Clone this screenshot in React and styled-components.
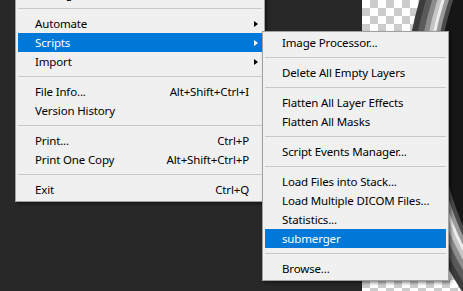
import React from 'react';
import styled, { createGlobalStyle } from 'styled-components';

const GlobalStyle = createGlobalStyle`
  html, body {
    margin: 0;
    padding: 0;
    background: #282828;
    overflow: hidden;
  }
`;

const Workspace = styled.div`
  position: relative;
  width: 463px;
  height: 291px;
  display: flex;
  overflow: hidden;
  font-family: 'Noto Sans', 'Segoe UI', sans-serif;
  font-size: 11.5px;
  letter-spacing: -0.15px;
`;

const Pasteboard = styled.div`
  flex: 1;
  background: #282828;
`;

const Canvas = styled.div`
  width: 101px;
  height: 100%;
  background-color: #ffffff;
  background-image: conic-gradient(#cccccc 25%, #ffffff 0 50%, #cccccc 0 75%, #ffffff 0);
  background-size: 16px 16px;
  background-position: 0 0;
`;

const Artwork = styled.svg`
  display: block;
  width: 100%;
  height: 100%;
`;

const Menu = styled.div`
  position: absolute;
  left: ${({ $left }) => $left}px;
  top: ${({ $top }) => $top}px;
  width: ${({ $width }) => $width}px;
  background: #f0f0f0;
  border: 1px solid #a0a0a0;
  padding: 1px 2px 2px;
  box-shadow: 2px 2px 3px rgba(0, 0, 0, 0.45);
`;

const Row = styled.div`
  display: flex;
  align-items: center;
  height: 19px;
  padding: 0 3px 0 17px;
  color: ${({ $active }) => ($active ? '#ffffff' : '#000000')};
  background: ${({ $active }) => ($active ? '#0078d7' : 'transparent')};
  white-space: nowrap;
`;

const Label = styled.span`
  flex: 1;
`;

const Shortcut = styled.span`
  text-align: right;
`;

const ArrowSlot = styled.span`
  width: 10px;
  display: flex;
  justify-content: flex-end;
`;

const Arrow = styled.span`
  width: 0;
  height: 0;
  border-top: 3.5px solid transparent;
  border-bottom: 3.5px solid transparent;
  border-left: 4px solid ${({ $active }) => ($active ? '#ffffff' : '#000000')};
  margin-right: 1px;
`;

const Separator = styled.div`
  height: 11px;
  display: flex;
  align-items: center;
  &::after {
    content: '';
    flex: 1;
    height: 1px;
    background: #c8c8c8;
  }
`;

const fileMenu = [
  { label: 'Package...' },
  '-',
  { label: 'Automate', sub: true },
  { label: 'Scripts', sub: true, active: true },
  { label: 'Import', sub: true },
  '-',
  { label: 'File Info...', key: 'Alt+Shift+Ctrl+I' },
  { label: 'Version History' },
  '-',
  { label: 'Print...', key: 'Ctrl+P' },
  { label: 'Print One Copy', key: 'Alt+Shift+Ctrl+P' },
  '-',
  { label: 'Exit', key: 'Ctrl+Q' },
];

const scriptsMenu = [
  { label: 'Image Processor...' },
  '-',
  { label: 'Delete All Empty Layers' },
  '-',
  { label: 'Flatten All Layer Effects' },
  { label: 'Flatten All Masks' },
  '-',
  { label: 'Script Events Manager...' },
  '-',
  { label: 'Load Files into Stack...' },
  { label: 'Load Multiple DICOM Files...' },
  { label: 'Statistics...' },
  { label: 'submerger', active: true },
  '-',
  { label: 'Browse...' },
];

// rings of the tyre photo on the canvas
const rings = [
  [350, '#3c3c3c'],
  [344, '#5a5a5a'],
  [338, '#8c8c8c'],
  [333, '#c4c4c4'],
  [329, '#ececec'],
  [326, '#9a9a9a'],
  [322, '#4a4a4a'],
  [318, '#161616'],
];

function MenuItems({ items, withArrows }) {
  return items.map((item, i) =>
    item === '-' ? (
      <Separator key={i} />
    ) : (
      <Row key={i} $active={item.active}>
        <Label>{item.label}</Label>
        {item.key && <Shortcut>{item.key}</Shortcut>}
        {withArrows && (
          <ArrowSlot>{item.sub && <Arrow $active={item.active} />}</ArrowSlot>
        )}
      </Row>
    )
  );
}

export default function App() {
  return (
    <>
      <GlobalStyle />
      <Workspace>
        <Pasteboard />
        <Canvas>
          <Artwork viewBox="0 0 101 291">
            {rings.map(([r, fill]) => (
              <circle key={r} cx="393" cy="100" r={r} fill={fill} />
            ))}
          </Artwork>
        </Canvas>
        <Menu $left={15} $top={-18} $width={244}>
          <MenuItems items={fileMenu} withArrows />
        </Menu>
        <Menu $left={262} $top={31} $width={181}>
          <MenuItems items={scriptsMenu} />
        </Menu>
      </Workspace>
    </>
  );
}
